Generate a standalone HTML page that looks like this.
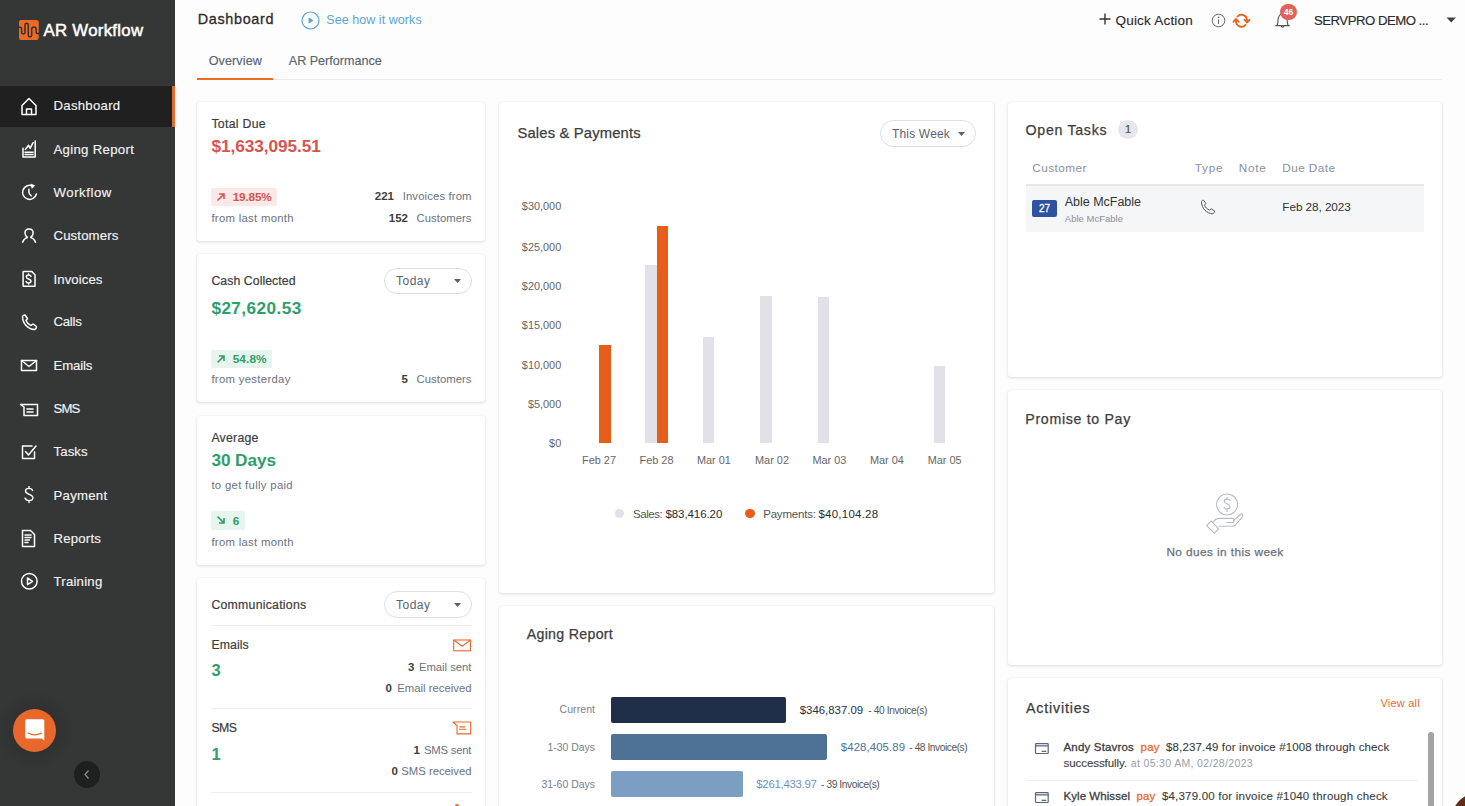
<!DOCTYPE html>
<html><head><meta charset="utf-8"><title>AR Workflow Dashboard</title>
<style>
html,body{margin:0;padding:0;}
body{width:1465px;height:806px;overflow:hidden;position:relative;background:#fdfdfd;font-family:"Liberation Sans",sans-serif;}
.a{position:absolute;display:block;}
.t{position:absolute;line-height:1;white-space:nowrap;}
</style></head><body>
<div class="a" style="left:0px;top:0px;width:175px;height:806px;background:#353737;"></div>
<div class="a" style="left:0px;top:86px;width:172px;height:41px;background:#1f201f;"></div>
<div class="a" style="left:172px;top:86px;width:3px;height:41px;background:#e8692c;"></div>
<svg class="a" style="left:18.7px;top:19.8px;overflow:visible;" width="20" height="20" viewBox="0 0 20 20"><rect x="0" y="0" width="19.7" height="19.9" rx="1.8" fill="#ec6a22"/><path d="M-0.5 7.3 H1 Q2.6 7.3 2.6 9 V12.2 A1.7 1.7 0 0 0 6 12.2 V4.85 A1.65 1.65 0 0 1 9.3 4.85 V15.3 A1.7 1.7 0 0 0 12.7 15.3 V9.3 A2.2 2.2 0 0 1 17.1 9.3 V11.8 Q17.1 13.6 19 13.6 H20" fill="none" stroke="#2f3133" stroke-width="1.5"/></svg>
<div class="t" style="top:23.00px;font-size:16.8px;color:#ffffff;font-weight:400;letter-spacing:0.293px;left:43.5px;-webkit-text-stroke:0.5px #fff;">AR Workflow</div>
<div class="t" style="top:99.00px;font-size:13.2px;color:#f2f2f2;font-weight:400;letter-spacing:0.269px;left:53.5px;-webkit-text-stroke:0.15px #f2f2f2;">Dashboard</div>
<div class="t" style="top:143.00px;font-size:13.2px;color:#f2f2f2;font-weight:400;letter-spacing:0.304px;left:53.5px;-webkit-text-stroke:0.15px #f2f2f2;">Aging Report</div>
<div class="t" style="top:186.00px;font-size:13.2px;color:#f2f2f2;font-weight:400;letter-spacing:0.546px;left:53.5px;-webkit-text-stroke:0.15px #f2f2f2;">Workflow</div>
<div class="t" style="top:229.00px;font-size:13.2px;color:#f2f2f2;font-weight:400;letter-spacing:0.131px;left:53.5px;-webkit-text-stroke:0.15px #f2f2f2;">Customers</div>
<div class="t" style="top:273.00px;font-size:13.2px;color:#f2f2f2;font-weight:400;letter-spacing:0.084px;left:53.5px;-webkit-text-stroke:0.15px #f2f2f2;">Invoices</div>
<div class="t" style="top:315.00px;font-size:13.2px;color:#f2f2f2;font-weight:400;letter-spacing:-0.248px;left:53.5px;-webkit-text-stroke:0.15px #f2f2f2;">Calls</div>
<div class="t" style="top:359.00px;font-size:13.2px;color:#f2f2f2;font-weight:400;letter-spacing:-0.151px;left:53.5px;-webkit-text-stroke:0.15px #f2f2f2;">Emails</div>
<div class="t" style="top:402.00px;font-size:13.2px;color:#f2f2f2;font-weight:400;letter-spacing:-0.902px;left:53.5px;-webkit-text-stroke:0.15px #f2f2f2;">SMS</div>
<div class="t" style="top:445.00px;font-size:13.2px;color:#f2f2f2;font-weight:400;letter-spacing:0.112px;left:53.5px;-webkit-text-stroke:0.15px #f2f2f2;">Tasks</div>
<div class="t" style="top:489.00px;font-size:13.2px;color:#f2f2f2;font-weight:400;letter-spacing:0.258px;left:53.5px;-webkit-text-stroke:0.15px #f2f2f2;">Payment</div>
<div class="t" style="top:532.00px;font-size:13.2px;color:#f2f2f2;font-weight:400;letter-spacing:0.211px;left:53.5px;-webkit-text-stroke:0.15px #f2f2f2;">Reports</div>
<div class="t" style="top:575.00px;font-size:13.2px;color:#f2f2f2;font-weight:400;letter-spacing:0.225px;left:53.5px;-webkit-text-stroke:0.15px #f2f2f2;">Training</div>
<svg class="a" style="left:20px;top:97px;" width="18" height="19" viewBox="0 0 18 19"><path d="M2 8.5 L9 1.5 L16 8.5 V17.5 H2 Z" fill="none" stroke="#ffffff" stroke-width="1.5" stroke-linejoin="round" stroke-linecap="round"/><path d="M6.5 17.5 V12 H11.5 V17.5" fill="none" stroke="#ffffff" stroke-width="1.5" stroke-linejoin="round" stroke-linecap="round"/></svg>
<svg class="a" style="left:20px;top:140px;" width="18" height="19" viewBox="0 0 18 19"><path d="M3 8.3 V16.9 H15.2 V1" fill="none" stroke="#ffffff" stroke-width="1.5" stroke-linejoin="round" stroke-linecap="round" stroke-width="1.6"/><path d="M5.3 9.5 L8.6 5.3 L10.1 8.3 L13.1 2.7" fill="none" stroke="#ffffff" stroke-width="1.5" stroke-linejoin="round" stroke-linecap="round" stroke-width="1.5"/><path d="M5 12.3 H13.1 M5 14.6 H13.1" fill="none" stroke="#ffffff" stroke-width="1.5" stroke-linejoin="round" stroke-linecap="round" stroke-width="1.3"/></svg>
<svg class="a" style="left:20px;top:183px;" width="18" height="18" viewBox="0 0 18 18"><path d="M12.3 2.9 A7 7 0 1 0 16.4 11" fill="none" stroke="#ffffff" stroke-width="1.5" stroke-linejoin="round" stroke-linecap="round"/><path d="M11 1.2 L14.6 2.6 L12 5.3 Z" fill="#fff" stroke="#fff" stroke-width="0.8" stroke-linejoin="round"/><path d="M8.9 6.3 V9.3 Q8.9 11.3 11.3 12.8" fill="none" stroke="#ffffff" stroke-width="1.5" stroke-linejoin="round" stroke-linecap="round"/></svg>
<svg class="a" style="left:20px;top:228px;" width="17" height="16" viewBox="0 0 17 16"><path d="M7.4 9.4 C5.6 7.8 5 6.1 5 4.9 C5 2.6 6.8 1 9.1 1 C11.4 1 13.1 2.6 13.1 4.9 C13.1 6.1 12.6 7.8 10.7 9.4 M7.4 9.4 C5 10.4 3.3 11.6 2.7 14.2 M10.7 9.4 C13.1 10.4 14.8 11.6 15.5 14.2" fill="none" stroke="#ffffff" stroke-width="1.5" stroke-linejoin="round" stroke-linecap="round" stroke-width="1.6"/></svg>
<svg class="a" style="left:20px;top:270px;" width="17" height="18" viewBox="0 0 17 18"><path d="M3.1 1.4 H11.6 L15 4.8 V16.3 H3.1 Z" fill="none" stroke="#ffffff" stroke-width="1.5" stroke-linejoin="round" stroke-linecap="round" stroke-width="1.7"/><path d="M11 6.4 C10.6 5.5 9.7 5 8.6 5 C7.3 5 6.3 5.7 6.3 6.9 C6.3 9.3 11 8.6 11 11.1 C11 12.2 10 12.9 8.6 12.9 C7.4 12.9 6.5 12.4 6.1 11.6 M8.6 3.9 V5 M8.6 12.9 V14" fill="none" stroke="#ffffff" stroke-width="1.5" stroke-linejoin="round" stroke-linecap="round" stroke-width="1.5"/></svg>
<svg class="a" style="left:20px;top:313px;" width="18" height="18" viewBox="0 0 18 18"><path d="M2.5 3.5 C3 2.5 4 1.8 5 2 L7.5 5.5 L6 7.5 C7 10 8.5 11.5 11 12.5 L13 11 L16.5 13.5 C16.5 15 15.5 16.2 14.5 16.5 C8 16 2.5 10.5 2.5 3.5 Z" fill="none" stroke="#ffffff" stroke-width="1.5" stroke-linejoin="round" stroke-linecap="round" stroke-width="1.3"/></svg>
<svg class="a" style="left:20px;top:359px;" width="18" height="13" viewBox="0 0 18 13"><rect x="1.5" y="1.5" width="15" height="10" fill="none" stroke="#ffffff" stroke-width="1.5" stroke-linejoin="round" stroke-linecap="round"/><path d="M1.5 1.5 L9 7.5 L16.5 1.5" fill="none" stroke="#ffffff" stroke-width="1.5" stroke-linejoin="round" stroke-linecap="round"/></svg>
<svg class="a" style="left:19px;top:403px;" width="20" height="14" viewBox="0 0 20 14"><path d="M1.5 1.5 H18.5 V12.5 H5 V4 Z" fill="none" stroke="#ffffff" stroke-width="1.5" stroke-linejoin="round" stroke-linecap="round"/><path d="M8 6 H14 M8 9 H14" fill="none" stroke="#ffffff" stroke-width="1.5" stroke-linejoin="round" stroke-linecap="round"/></svg>
<svg class="a" style="left:20px;top:444px;" width="18" height="16" viewBox="0 0 18 16"><path d="M14.5 8 V14.5 H2.5 V2 H12" fill="none" stroke="#ffffff" stroke-width="1.5" stroke-linejoin="round" stroke-linecap="round"/><path d="M5.5 7.5 L8.5 11 L16 2" fill="none" stroke="#ffffff" stroke-width="1.5" stroke-linejoin="round" stroke-linecap="round"/></svg>
<svg class="a" style="left:24px;top:486px;" width="11" height="18" viewBox="0 0 11 18"><path d="M8.6 4.6 C8.1 3.1 6.8 2.4 5 2.4 C3 2.4 1.5 3.5 1.5 5.1 C1.5 8.9 8.9 7.7 8.9 11.7 C8.9 13.5 7.3 14.6 5 14.6 C3 14.6 1.6 13.7 1 12.1 M5 0.6 V2.4 M5 14.6 V16.6" fill="none" stroke="#fff" stroke-width="1.4" stroke-linecap="round"/></svg>
<svg class="a" style="left:20px;top:529px;" width="17" height="19" viewBox="0 0 17 19"><path d="M2.5 1.5 H10.5 L14.5 5.5 V17.5 H2.5 Z" fill="none" stroke="#ffffff" stroke-width="1.5" stroke-linejoin="round" stroke-linecap="round"/><path d="M5 6 H11 M5 8.5 H11 M5 11 H9.5 M5 13.5 H8" fill="none" stroke="#ffffff" stroke-width="1.5" stroke-linejoin="round" stroke-linecap="round"/></svg>
<svg class="a" style="left:20px;top:572px;" width="19" height="19" viewBox="0 0 19 19"><circle cx="9.3" cy="9.3" r="7.8" fill="none" stroke="#ffffff" stroke-width="1.5" stroke-linejoin="round" stroke-linecap="round"/><path d="M7.5 6 L12.5 9.3 L7.5 12.6 Z" fill="none" stroke="#ffffff" stroke-width="1.5" stroke-linejoin="round" stroke-linecap="round" stroke-width="1.3"/></svg>
<div class="a" style="left:0px;top:690px;width:80px;height:85px;background:radial-gradient(circle at 34.5px 40.5px, rgba(0,0,0,0.10) 22px, rgba(0,0,0,0) 40px);"></div>
<div class="a" style="left:13px;top:709px;width:43px;height:43px;background:#e8672a;border-radius:50%;"></div>
<svg class="a" style="left:25px;top:719px;" width="20" height="22" viewBox="0 0 20 22"><path d="M1.5 0.3 H17.8 a1.5 1.5 0 0 1 1.5 1.5 V21.5 L16.5 19.4 H1.5 a1.3 1.3 0 0 1 -1.3 -1.3 V1.8 a1.5 1.5 0 0 1 1.5 -1.5 Z" fill="#fff"/><path d="M3 14 Q9.8 17.8 16.6 14" fill="none" stroke="#e8672a" stroke-width="1.3" stroke-linecap="round"/></svg>
<div class="a" style="left:74px;top:761px;width:26px;height:27px;background:#1e1f1f;border-radius:50%;"></div>
<svg class="a" style="left:82px;top:768px;" width="10" height="13" viewBox="0 0 10 13"><path d="M6.5 2.5 L3 6.5 L6.5 10.5" fill="none" stroke="#8a8a8a" stroke-width="1.3"/></svg>
<div class="t" style="top:12.00px;font-size:14.4px;color:#2b2b2b;font-weight:400;letter-spacing:0.661px;left:197.8px;-webkit-text-stroke:0.3px #2b2b2b;">Dashboard</div>
<svg class="a" style="left:301px;top:11px;" width="19" height="19" viewBox="0 0 19 19"><circle cx="9.5" cy="9.5" r="8.5" fill="none" stroke="#5aa5d6" stroke-width="1.2"/><path d="M7.6 6.2 L12.4 9.5 L7.6 12.8 Z" fill="#5aa5d6"/></svg>
<div class="t" style="top:14.00px;font-size:12.5px;color:#5aa5d6;font-weight:400;letter-spacing:0.057px;left:326.3px;">See how it works</div>
<div class="t" style="top:55.00px;font-size:12.6px;color:#5b6370;font-weight:400;letter-spacing:0.099px;left:208.7px;-webkit-text-stroke:0.15px #5b6370;">Overview</div>
<div class="t" style="top:55.00px;font-size:12.6px;color:#5b6370;font-weight:400;letter-spacing:-0.017px;left:288.8px;-webkit-text-stroke:0.15px #5b6370;">AR Performance</div>
<div class="a" style="left:272px;top:79px;width:1170px;height:1px;background:#ebebed;"></div>
<div class="a" style="left:197px;top:78px;width:76px;height:2px;background:#ec6c22;"></div>
<svg class="a" style="left:1099px;top:13px;" width="12" height="12" viewBox="0 0 12 12"><path d="M6 0.5 V11.5 M0.5 6 H11.5" stroke="#333" stroke-width="1.4"/></svg>
<div class="t" style="top:14.00px;font-size:13.5px;color:#2b2b2b;font-weight:400;letter-spacing:0.205px;left:1115.5px;-webkit-text-stroke:0.15px #2b2b2b;">Quick Action</div>
<svg class="a" style="left:1211px;top:13px;" width="15" height="15" viewBox="0 0 15 15"><circle cx="7.5" cy="7.5" r="6.3" fill="none" stroke="#666" stroke-width="1"/><path d="M7.5 6.5 V11" stroke="#666" stroke-width="1.1"/><circle cx="7.5" cy="4.4" r="0.8" fill="#666"/></svg>
<svg class="a" style="left:1231px;top:13px;" width="20" height="16" viewBox="0 0 20 16"><g fill="none" stroke="#e8601c" stroke-width="1.75" stroke-linecap="round" stroke-linejoin="round"><path d="M6.4 3.6 A5.5 5.5 0 0 1 16 7.6"/><path d="M13.4 6.6 L16 9.6 L18.6 6.6"/><path d="M14.6 11.9 A5.5 5.5 0 0 1 5 7.9"/><path d="M2.4 8.9 L5 5.9 L7.6 8.9"/></g></svg>
<svg class="a" style="left:1274px;top:12px;" width="18" height="17" viewBox="0 0 18 17"><path d="M1.8 13.6 H15.4 M3 13.4 C3.8 12.2 4 10.8 4 8.5 C4 4.6 5.8 1.8 8.6 1.8 C11.4 1.8 13.2 4.6 13.2 8.5 C13.2 10.8 13.4 12.2 14.2 13.4" fill="none" stroke="#555" stroke-width="1.1" stroke-linejoin="round" stroke-linecap="round"/><path d="M7.3 13.8 A1.3 1.3 0 0 0 9.9 13.8" fill="none" stroke="#555" stroke-width="1.1"/></svg>
<div class="a" style="left:1280px;top:3.5px;width:16.5px;height:16.5px;background:#e0625a;border-radius:50%;"></div>
<div class="t" style="top:8.00px;font-size:8.5px;color:#ffffff;font-weight:700;left:1288.5px;width:0;display:flex;justify-content:center;">46</div>
<div class="t" style="top:14.00px;font-size:13.2px;color:#2b2b2b;font-weight:400;letter-spacing:-0.503px;left:1314px;-webkit-text-stroke:0.15px #2b2b2b;">SERVPRO DEMO ...</div>
<svg class="a" style="left:1446px;top:17px;" width="11" height="6" viewBox="0 0 11 6"><path d="M0.5 0.5 H10 L5.25 5.5 Z" fill="#444"/></svg>
<div class="a" style="left:197px;top:102px;width:288px;height:139px;background:#fff;border-radius:3px;box-shadow:0 1px 3px rgba(30,40,60,0.15),0 0 1px rgba(30,40,60,0.08);"></div>
<div class="a" style="left:197px;top:254px;width:288px;height:148px;background:#fff;border-radius:3px;box-shadow:0 1px 3px rgba(30,40,60,0.15),0 0 1px rgba(30,40,60,0.08);"></div>
<div class="a" style="left:197px;top:416px;width:288px;height:149px;background:#fff;border-radius:3px;box-shadow:0 1px 3px rgba(30,40,60,0.15),0 0 1px rgba(30,40,60,0.08);"></div>
<div class="a" style="left:197px;top:578px;width:288px;height:252px;background:#fff;border-radius:3px;box-shadow:0 1px 3px rgba(30,40,60,0.15),0 0 1px rgba(30,40,60,0.08);"></div>
<div class="a" style="left:499px;top:102px;width:495px;height:491px;background:#fff;border-radius:3px;box-shadow:0 1px 3px rgba(30,40,60,0.15),0 0 1px rgba(30,40,60,0.08);"></div>
<div class="a" style="left:499px;top:606px;width:495px;height:224px;background:#fff;border-radius:3px;box-shadow:0 1px 3px rgba(30,40,60,0.15),0 0 1px rgba(30,40,60,0.08);"></div>
<div class="a" style="left:1008px;top:102px;width:434px;height:275px;background:#fff;border-radius:3px;box-shadow:0 1px 3px rgba(30,40,60,0.15),0 0 1px rgba(30,40,60,0.08);"></div>
<div class="a" style="left:1008px;top:390px;width:434px;height:275px;background:#fff;border-radius:3px;box-shadow:0 1px 3px rgba(30,40,60,0.15),0 0 1px rgba(30,40,60,0.08);"></div>
<div class="a" style="left:1008px;top:678px;width:434px;height:152px;background:#fff;border-radius:3px;box-shadow:0 1px 3px rgba(30,40,60,0.15),0 0 1px rgba(30,40,60,0.08);"></div>
<div class="t" style="top:118.00px;font-size:12.3px;color:#3d3d3d;font-weight:400;letter-spacing:0.293px;left:211.4px;-webkit-text-stroke:0.2px #3d3d3d;">Total Due</div>
<div class="t" style="top:138.00px;font-size:17.2px;color:#d9534f;font-weight:700;letter-spacing:-0.046px;left:211.4px;">$1,633,095.51</div>
<div class="a" style="left:211px;top:188px;width:66px;height:18px;background:#fbe9e7;border-radius:2px;"></div>
<svg class="a" style="left:216px;top:192px;" width="10" height="10" viewBox="0 0 10 10"><path d="M1.5 8.5 L8 2 M3 2 H8 V7" fill="none" stroke="#d9534f" stroke-width="1.6"/></svg>
<div class="t" style="top:192.00px;font-size:11.8px;color:#d9534f;font-weight:700;letter-spacing:-0.170px;left:232.7px;">19.85%</div>
<div class="t" style="top:213.00px;font-size:11.3px;color:#6b7280;font-weight:400;letter-spacing:0.309px;left:211.4px;">from last month</div>
<div class="t" style="top:191.00px;font-size:11.5px;color:#3d3d3d;font-weight:700;right:1071.00px;">221</div>
<div class="t" style="top:191.00px;font-size:11.3px;color:#6b7280;font-weight:400;letter-spacing:0.139px;right:993.36px;">Invoices from</div>
<div class="t" style="top:213.00px;font-size:11.5px;color:#3d3d3d;font-weight:700;right:1057.00px;">152</div>
<div class="t" style="top:213.00px;font-size:11.3px;color:#6b7280;font-weight:400;letter-spacing:0.052px;right:993.45px;">Customers</div>
<div class="t" style="top:275.00px;font-size:12.3px;color:#3d3d3d;font-weight:400;letter-spacing:0.056px;left:211.4px;-webkit-text-stroke:0.2px #3d3d3d;">Cash Collected</div>
<div class="a" style="left:384px;top:268px;width:88px;height:26px;border:1px solid #dcdfe3;border-radius:14px;box-sizing:border-box;background:#fff;"></div>
<div class="t" style="top:275.00px;font-size:12px;color:#5b6370;font-weight:400;letter-spacing:0.496px;left:396px;">Today</div>
<svg class="a" style="left:454px;top:279.0px;" width="7" height="4" viewBox="0 0 7 4"><path d="M0 0 H7 L3.5 4 Z" fill="#5b6370"/></svg>
<div class="t" style="top:300.00px;font-size:17.2px;color:#2e9e6a;font-weight:700;letter-spacing:0.431px;left:211.4px;">$27,620.53</div>
<div class="a" style="left:211px;top:350px;width:61px;height:18px;background:#e8f4ee;border-radius:2px;"></div>
<svg class="a" style="left:216px;top:354px;" width="10" height="10" viewBox="0 0 10 10"><path d="M1.5 8.5 L8 2 M3 2 H8 V7" fill="none" stroke="#2e9e6a" stroke-width="1.6"/></svg>
<div class="t" style="top:354.00px;font-size:11.8px;color:#2e9e6a;font-weight:700;letter-spacing:0.108px;left:232.7px;">54.8%</div>
<div class="t" style="top:374.00px;font-size:11.3px;color:#6b7280;font-weight:400;letter-spacing:0.326px;left:211.4px;">from yesterday</div>
<div class="t" style="top:374.00px;font-size:11.5px;color:#3d3d3d;font-weight:700;right:1057.00px;">5</div>
<div class="t" style="top:374.00px;font-size:11.3px;color:#6b7280;font-weight:400;letter-spacing:0.052px;right:993.45px;">Customers</div>
<div class="t" style="top:432.00px;font-size:12.3px;color:#3d3d3d;font-weight:400;letter-spacing:0.244px;left:211.4px;-webkit-text-stroke:0.2px #3d3d3d;">Average</div>
<div class="t" style="top:452.00px;font-size:17.2px;color:#2e9e6a;font-weight:700;letter-spacing:-0.062px;left:211.4px;">30 Days</div>
<div class="t" style="top:480.00px;font-size:11.3px;color:#6b7280;font-weight:400;letter-spacing:0.329px;left:211.4px;">to get fully paid</div>
<div class="a" style="left:211px;top:511px;width:34px;height:19px;background:#e8f4ee;border-radius:2px;"></div>
<svg class="a" style="left:216px;top:515px;" width="10" height="10" viewBox="0 0 10 10"><path d="M1.5 1.5 L8 8 M8 3 V8 H3" fill="none" stroke="#2e9e6a" stroke-width="1.6"/></svg>
<div class="t" style="top:516.00px;font-size:11.8px;color:#2e9e6a;font-weight:700;left:232.7px;">6</div>
<div class="t" style="top:537.00px;font-size:11.3px;color:#6b7280;font-weight:400;letter-spacing:0.309px;left:211.4px;">from last month</div>
<div class="t" style="top:599.00px;font-size:12.3px;color:#3d3d3d;font-weight:400;letter-spacing:0.243px;left:211.4px;-webkit-text-stroke:0.2px #3d3d3d;">Communications</div>
<div class="a" style="left:384px;top:591px;width:88px;height:27px;border:1px solid #dcdfe3;border-radius:14px;box-sizing:border-box;background:#fff;"></div>
<div class="t" style="top:599.00px;font-size:12px;color:#5b6370;font-weight:400;letter-spacing:0.496px;left:396px;">Today</div>
<svg class="a" style="left:454px;top:602.5px;" width="7" height="4" viewBox="0 0 7 4"><path d="M0 0 H7 L3.5 4 Z" fill="#5b6370"/></svg>
<div class="a" style="left:211px;top:625px;width:261px;height:1px;background:#eceef0;"></div>
<div class="t" style="top:639.00px;font-size:12.3px;color:#3d3d3d;font-weight:400;letter-spacing:0.082px;left:211.4px;-webkit-text-stroke:0.2px #3d3d3d;">Emails</div>
<svg class="a" style="left:453px;top:639px;" width="19" height="13" viewBox="0 0 19 13"><rect x="0.7" y="1" width="16.8" height="10.8" fill="none" stroke="#e8692c" stroke-width="1.1"/><path d="M0.7 1 L9.1 7.2 L17.5 1" fill="none" stroke="#e8692c" stroke-width="1.1"/></svg>
<div class="t" style="top:662.00px;font-size:16.5px;color:#2e9e6a;font-weight:700;left:211.4px;">3</div>
<div class="t" style="top:662.00px;font-size:11.3px;color:#6b7280;font-weight:400;letter-spacing:-0.016px;right:993.52px;">Email sent</div>
<div class="t" style="top:662.00px;font-size:11.5px;color:#3d3d3d;font-weight:700;right:1050.50px;">3</div>
<div class="t" style="top:683.00px;font-size:11.3px;color:#6b7280;font-weight:400;letter-spacing:0.021px;right:993.48px;">Email received</div>
<div class="t" style="top:683.00px;font-size:11.5px;color:#3d3d3d;font-weight:700;right:1073.00px;">0</div>
<div class="a" style="left:211px;top:708px;width:261px;height:1px;background:#eceef0;"></div>
<div class="t" style="top:722.00px;font-size:12.3px;color:#3d3d3d;font-weight:400;letter-spacing:-0.552px;left:211.4px;-webkit-text-stroke:0.2px #3d3d3d;">SMS</div>
<svg class="a" style="left:452px;top:721px;" width="20" height="14" viewBox="0 0 20 14"><path d="M1 1 H18.7 V12.9 H5 V4.5 Z" fill="none" stroke="#e8692c" stroke-width="1.1" stroke-linejoin="round"/><path d="M7.5 5.9 H13 M7 8.2 H14.4" stroke="#e8692c" stroke-width="1.1"/></svg>
<div class="t" style="top:746.00px;font-size:16.5px;color:#2e9e6a;font-weight:700;left:211.4px;">1</div>
<div class="t" style="top:745.00px;font-size:11.3px;color:#6b7280;font-weight:400;letter-spacing:-0.198px;right:993.70px;">SMS sent</div>
<div class="t" style="top:745.00px;font-size:11.5px;color:#3d3d3d;font-weight:700;right:1045.00px;">1</div>
<div class="t" style="top:766.00px;font-size:11.3px;color:#6b7280;font-weight:400;letter-spacing:-0.012px;right:993.51px;">SMS received</div>
<div class="t" style="top:766.00px;font-size:11.5px;color:#3d3d3d;font-weight:700;right:1067.20px;">0</div>
<div class="a" style="left:211px;top:792px;width:261px;height:1px;background:#eceef0;"></div>
<div class="a" style="left:454.5px;top:804px;width:4.0px;height:2px;background:#e8692c;border-radius:2px 2px 0 0;"></div>
<div class="t" style="top:126.00px;font-size:14.8px;color:#3d3d3d;font-weight:400;letter-spacing:0.155px;left:517.4px;-webkit-text-stroke:0.25px #3d3d3d;">Sales &amp; Payments</div>
<div class="a" style="left:880px;top:120px;width:96px;height:27px;border:1px solid #dcdfe3;border-radius:14px;box-sizing:border-box;background:#fff;"></div>
<div class="t" style="top:128.00px;font-size:12px;color:#5b6370;font-weight:400;letter-spacing:0.171px;left:892px;">This Week</div>
<svg class="a" style="left:958px;top:131.5px;" width="7" height="4" viewBox="0 0 7 4"><path d="M0 0 H7 L3.5 4 Z" fill="#5b6370"/></svg>
<div class="t" style="top:201.00px;font-size:10.9px;color:#666666;font-weight:400;right:903.80px;">$30,000</div>
<div class="t" style="top:242.00px;font-size:10.9px;color:#666666;font-weight:400;right:903.80px;">$25,000</div>
<div class="t" style="top:281.00px;font-size:10.9px;color:#666666;font-weight:400;right:903.80px;">$20,000</div>
<div class="t" style="top:320.00px;font-size:10.9px;color:#666666;font-weight:400;right:903.80px;">$15,000</div>
<div class="t" style="top:360.00px;font-size:10.9px;color:#666666;font-weight:400;right:903.80px;">$10,000</div>
<div class="t" style="top:399.00px;font-size:10.9px;color:#666666;font-weight:400;right:903.80px;">$5,000</div>
<div class="t" style="top:438.00px;font-size:10.9px;color:#666666;font-weight:400;right:903.80px;">$0</div>
<div class="a" style="left:645px;top:265px;width:12px;height:178px;background:#e2e1e9;"></div>
<div class="a" style="left:657px;top:226px;width:11px;height:217px;background:#e85d1a;"></div>
<div class="a" style="left:599px;top:345px;width:12px;height:98px;background:#e85d1a;"></div>
<div class="a" style="left:703px;top:337px;width:11px;height:106px;background:#e2e1e9;"></div>
<div class="a" style="left:760px;top:296px;width:12px;height:147px;background:#e2e1e9;"></div>
<div class="a" style="left:818px;top:297px;width:11px;height:146px;background:#e2e1e9;"></div>
<div class="a" style="left:934px;top:366px;width:11px;height:77px;background:#e2e1e9;"></div>
<div class="t" style="top:455.00px;font-size:10.9px;color:#666666;font-weight:400;left:599px;width:0;display:flex;justify-content:center;">Feb 27</div>
<div class="t" style="top:455.00px;font-size:10.9px;color:#666666;font-weight:400;left:656.5px;width:0;display:flex;justify-content:center;">Feb 28</div>
<div class="t" style="top:455.00px;font-size:10.9px;color:#666666;font-weight:400;left:713.9px;width:0;display:flex;justify-content:center;">Mar 01</div>
<div class="t" style="top:455.00px;font-size:10.9px;color:#666666;font-weight:400;left:772px;width:0;display:flex;justify-content:center;">Mar 02</div>
<div class="t" style="top:455.00px;font-size:10.9px;color:#666666;font-weight:400;left:829.4px;width:0;display:flex;justify-content:center;">Mar 03</div>
<div class="t" style="top:455.00px;font-size:10.9px;color:#666666;font-weight:400;left:886.9px;width:0;display:flex;justify-content:center;">Mar 04</div>
<div class="t" style="top:455.00px;font-size:10.9px;color:#666666;font-weight:400;left:944.7px;width:0;display:flex;justify-content:center;">Mar 05</div>
<div class="a" style="left:614.5px;top:508.5px;width:9.0px;height:9.0px;background:#e2e1e9;border-radius:50%;"></div>
<div class="t" style="top:509.00px;font-size:11.5px;color:#555;font-weight:400;letter-spacing:-0.410px;left:632.9px;">Sales:</div>
<div class="t" style="top:509.00px;font-size:11.5px;color:#2b2b2b;font-weight:400;letter-spacing:-0.086px;left:665.5px;">$83,416.20</div>
<div class="a" style="left:745px;top:508.5px;width:9.5px;height:9.0px;background:#e85d1a;border-radius:50%;"></div>
<div class="t" style="top:509.00px;font-size:11.5px;color:#555;font-weight:400;letter-spacing:-0.203px;left:763.2px;">Payments:</div>
<div class="t" style="top:509.00px;font-size:11.5px;color:#2b2b2b;font-weight:400;letter-spacing:0.224px;left:818.5px;">$40,104.28</div>
<div class="t" style="top:627.00px;font-size:14.2px;color:#3d3d3d;font-weight:400;letter-spacing:0.301px;left:526.7px;-webkit-text-stroke:0.25px #3d3d3d;">Aging Report</div>
<div class="t" style="top:704.00px;font-size:10.5px;color:#7a7f87;font-weight:400;letter-spacing:0.070px;right:869.93px;">Current</div>
<div class="t" style="top:742.00px;font-size:10.5px;color:#7a7f87;font-weight:400;letter-spacing:-0.028px;right:870.03px;">1-30 Days</div>
<div class="t" style="top:779.00px;font-size:10.5px;color:#7a7f87;font-weight:400;letter-spacing:-0.020px;right:870.02px;">31-60 Days</div>
<div class="a" style="left:611px;top:697px;width:175px;height:26px;background:#1f2f4a;border-radius:2px;"></div>
<div class="a" style="left:611px;top:734px;width:216px;height:26px;background:#4e7196;border-radius:2px;"></div>
<div class="a" style="left:611px;top:771px;width:132px;height:26px;background:#7b9ec1;border-radius:2px;"></div>
<div class="t" style="top:705.00px;font-size:11.4px;color:#1f2f4a;font-weight:400;letter-spacing:0.009px;left:799.7px;">$346,837.09</div>
<div class="t" style="top:706.00px;font-size:10.2px;color:#555;font-weight:400;letter-spacing:-0.395px;left:868.3px;">- 40 Invoice(s)</div>
<div class="t" style="top:742.00px;font-size:11.4px;color:#4e7196;font-weight:400;letter-spacing:0.091px;left:840.8px;">$428,405.89</div>
<div class="t" style="top:743.00px;font-size:10.2px;color:#555;font-weight:400;letter-spacing:-0.442px;left:909.3px;">- 48 Invoice(s)</div>
<div class="t" style="top:779.00px;font-size:11.4px;color:#6b95bf;font-weight:400;letter-spacing:-0.282px;left:756.3px;">$261,433.97</div>
<div class="t" style="top:780.00px;font-size:10.2px;color:#555;font-weight:400;letter-spacing:-0.415px;left:821px;">- 39 Invoice(s)</div>
<div class="t" style="top:123.00px;font-size:14.2px;color:#3d3d3d;font-weight:400;letter-spacing:0.698px;left:1025.6px;-webkit-text-stroke:0.25px #3d3d3d;">Open Tasks</div>
<div class="a" style="left:1118px;top:120px;width:20px;height:19px;background:#e5e7eb;border-radius:50%;"></div>
<div class="t" style="top:124.00px;font-size:11px;color:#4a5260;font-weight:400;left:1128px;width:0;display:flex;justify-content:center;-webkit-text-stroke:0.2px #4a5260;">1</div>
<div class="t" style="top:163.00px;font-size:11.8px;color:#8c9098;font-weight:400;letter-spacing:0.431px;left:1032.2px;">Customer</div>
<div class="t" style="top:163.00px;font-size:11.8px;color:#8c9098;font-weight:400;letter-spacing:0.754px;left:1194.8px;">Type</div>
<div class="t" style="top:163.00px;font-size:11.8px;color:#8c9098;font-weight:400;letter-spacing:0.744px;left:1238.7px;">Note</div>
<div class="t" style="top:163.00px;font-size:11.8px;color:#8c9098;font-weight:400;letter-spacing:0.406px;left:1282.3px;">Due Date</div>
<div class="a" style="left:1025.5px;top:184px;width:398.5px;height:2px;background:#e6e8ec;"></div>
<div class="a" style="left:1025.5px;top:186px;width:398.5px;height:46px;background:#f5f6f8;"></div>
<div class="a" style="left:1032px;top:199.5px;width:25px;height:17.5px;background:#2d53a0;border-radius:2px;"></div>
<div class="t" style="top:204.00px;font-size:10px;color:#fff;font-weight:400;left:1044.5px;width:0;display:flex;justify-content:center;-webkit-text-stroke:0.3px #fff;">27</div>
<div class="t" style="top:196.00px;font-size:12.5px;color:#333;font-weight:400;letter-spacing:-0.019px;left:1064.8px;">Able McFable</div>
<div class="t" style="top:214.00px;font-size:9.5px;color:#8c9098;font-weight:400;letter-spacing:0.010px;left:1064.8px;">Able McFable</div>
<svg class="a" style="left:1199px;top:198px;" width="19" height="19" viewBox="0 0 19 19"><path d="M2.5 3.6 C2.9 2.6 3.7 1.9 4.6 2.2 L6.9 5.4 L5.5 7.2 C6.4 9.5 8.2 11.1 10.5 12.2 L12.3 10.8 L15.6 13 C15.6 14.4 14.6 15.6 13.7 15.9 C7.6 15.4 2.5 10.3 2.5 3.6 Z" fill="none" stroke="#555" stroke-width="1"/></svg>
<div class="t" style="top:202.00px;font-size:11.8px;color:#333;font-weight:400;letter-spacing:-0.087px;left:1282.3px;">Feb 28, 2023</div>
<div class="t" style="top:412.00px;font-size:14.2px;color:#3d3d3d;font-weight:400;letter-spacing:0.673px;left:1025.3px;-webkit-text-stroke:0.25px #3d3d3d;">Promise to Pay</div>
<svg class="a" style="left:1205px;top:492px;" width="42" height="44" viewBox="0 0 42 44"><g fill="none" stroke="#b9bcc4" stroke-width="1.1" stroke-linejoin="round" stroke-linecap="round"><circle cx="22.1" cy="12.5" r="10.5"/><path d="M25 8.6 C24.5 7.6 23.5 7.1 22.1 7.1 C20.4 7.1 19.3 8 19.3 9.3 C19.3 12.3 25 11.3 25 14.6 C25 16 23.7 16.9 22.1 16.9 C20.7 16.9 19.5 16.3 19 15.3 M22.1 5.4 V7.1 M22.1 16.9 V19.4"/><path d="M8.4 29.9 C10 27.5 11.5 26.4 13.5 26.4 H27.5 C29.5 26.4 30 29.3 28 30.5 H21.7 M28.5 28.5 L35.5 22.3 C37 21.2 38.6 22.8 37.6 24.3 L31 32.5 C30.2 33.5 29.5 34.2 28 34.2 H13.9"/><path d="M1.6 33.6 L6.2 29 L13.6 36.8 L9.4 41.4 Z"/></g></svg>
<div class="t" style="top:547.00px;font-size:11.8px;color:#6b7078;font-weight:400;letter-spacing:0.421px;left:1166.4px;-webkit-text-stroke:0.25px #6b7078;">No dues in this week</div>
<div class="t" style="top:701.00px;font-size:14.2px;color:#3d3d3d;font-weight:400;letter-spacing:0.838px;left:1026px;-webkit-text-stroke:0.25px #3d3d3d;">Activities</div>
<div class="t" style="top:698.00px;font-size:11px;color:#e8692c;font-weight:400;letter-spacing:0.212px;right:45.19px;">View all</div>
<div class="a" style="left:1427.5px;top:732px;width:6.0px;height:98px;background:#a3a3a3;border-radius:3px;"></div>
<svg class="a" style="left:1034px;top:742px;" width="16" height="13" viewBox="0 0 16 13"><rect x="1.5" y="1.6" width="12.7" height="9.9" fill="none" stroke="#5b6478" stroke-width="1.2" rx="0.8"/><path d="M1.5 3.8 H14.2 M7.7 9.3 H12.3" stroke="#5b6478" stroke-width="1.2"/></svg>
<div class="t" style="top:742.00px;font-size:11.5px;color:#3d3d3d;font-weight:400;letter-spacing:0.175px;left:1063.5px;-webkit-text-stroke:0.3px #3d3d3d;">Andy Stavros</div>
<div class="t" style="top:742.00px;font-size:11.5px;color:#e8692c;font-weight:400;letter-spacing:0.153px;left:1140.6px;-webkit-text-stroke:0.3px #e8692c;">pay</div>
<div class="t" style="top:742.00px;font-size:11.5px;color:#3a3a3a;font-weight:400;letter-spacing:0.147px;left:1166px;-webkit-text-stroke:0.1px #3a3a3a;">$8,237.49 for invoice #1008 through check</div>
<div class="t" style="top:758.00px;font-size:11.5px;color:#3a3a3a;font-weight:400;letter-spacing:-0.064px;left:1063.5px;-webkit-text-stroke:0.1px #3a3a3a;">successfully.</div>
<div class="t" style="top:758.00px;font-size:10.5px;color:#9a9ea6;font-weight:400;letter-spacing:0.338px;left:1130.8px;">at 05:30 AM, 02/28/2023</div>
<div class="a" style="left:1025.5px;top:780px;width:392.5px;height:1px;background:#eceef0;"></div>
<svg class="a" style="left:1034px;top:791px;" width="16" height="13" viewBox="0 0 16 13"><rect x="1.5" y="1.6" width="12.7" height="9.9" fill="none" stroke="#5b6478" stroke-width="1.2" rx="0.8"/><path d="M1.5 3.8 H14.2 M7.7 9.3 H12.3" stroke="#5b6478" stroke-width="1.2"/></svg>
<div class="t" style="top:791.00px;font-size:11.5px;color:#3d3d3d;font-weight:400;letter-spacing:0.056px;left:1063.5px;-webkit-text-stroke:0.3px #3d3d3d;">Kyle Whissel</div>
<div class="t" style="top:791.00px;font-size:11.5px;color:#e8692c;font-weight:400;letter-spacing:0.153px;left:1136.5px;-webkit-text-stroke:0.3px #e8692c;">pay</div>
<div class="t" style="top:791.00px;font-size:11.5px;color:#3a3a3a;font-weight:400;letter-spacing:0.208px;left:1161.9px;-webkit-text-stroke:0.1px #3a3a3a;">$4,379.00 for invoice #1040 through check</div>
<div class="a" style="left:1451px;top:792px;width:58px;height:58px;background:#5e2d18;border-radius:50%;"></div>
</body></html>
